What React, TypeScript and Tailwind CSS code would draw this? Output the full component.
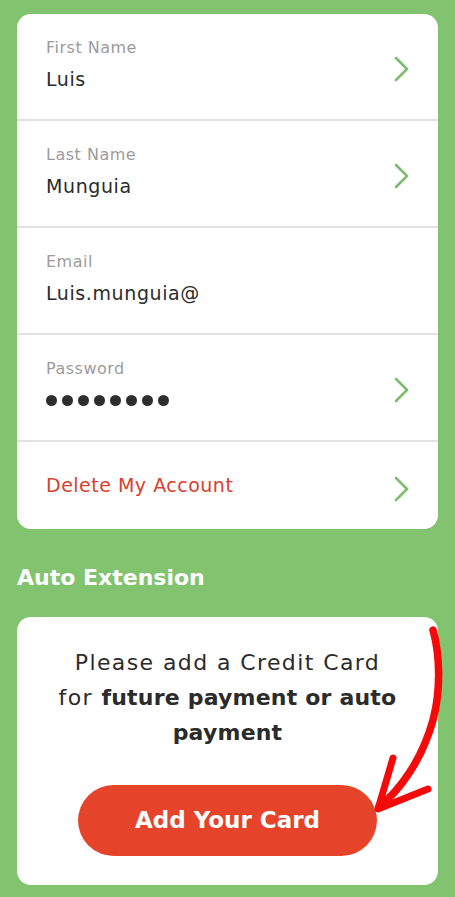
import React from "react";

const Chevron = () => (
  <svg width="16" height="26" viewBox="0 0 16 26" fill="none" className="shrink-0">
    <polyline points="2,2 13,13 2,24" stroke="#7dbd6b" strokeWidth="2.6" strokeLinecap="round" strokeLinejoin="round" />
  </svg>
);

const Row = ({ label, value, chevron = true, dots = false }: { label: string; value?: string; chevron?: boolean; dots?: boolean }) => (
  <div className="h-[107px] border-b-2 border-[#e2e2e2] flex items-start pl-[29px] pr-[28px]">
    <div className="flex-1 pt-[24px]">
      <div className="text-[16px] leading-[20px] tracking-[0.5px] text-[#9b9b9b]">{label}</div>
      {dots ? (
        <div className="mt-[14px] flex gap-[5px] h-[14px] items-center">
          {Array.from({ length: 8 }).map((_, i) => (
            <span key={i} className="w-[11px] h-[11px] rounded-full bg-[#2e2e2e]" />
          ))}
        </div>
      ) : (
        <div className="mt-[8px] text-[19px] leading-[26px] tracking-[0.6px] text-[#2b2b2b]">{value}</div>
      )}
    </div>
    {chevron && (
      <div className="pt-[42px]">
        <Chevron />
      </div>
    )}
  </div>
);

export default function App() {
  return (
    <div
      className="w-[455px] h-[897px] bg-[#81c36f] px-[17px] pt-[14px] relative overflow-hidden"
      style={{ fontFamily: "'DejaVu Sans', Inter, sans-serif" }}
    >
      <div className="bg-white rounded-[14px] overflow-hidden">
        <Row label="First Name" value="Luis" />
        <Row label="Last Name" value="Munguia" />
        <Row label="Email" value="Luis.munguia@" chevron={false} />
        <Row label="Password" dots />
        <div className="h-[87px] flex items-center pl-[29px] pr-[28px]">
          <div className="flex-1 text-[19px] tracking-[0.5px] text-[#d8402f]">Delete My Account</div>
          <div className="pt-[6px]">
            <Chevron />
          </div>
        </div>
      </div>

      <div className="mt-[35px] text-[22px] leading-[28px] font-bold text-white">Auto Extension</div>

      <div className="mt-[25px] bg-white rounded-[14px] pt-[28px] pb-[29px] flex flex-col items-center">
        <div className="text-[22px] leading-[35px] tracking-[1.4px] text-[#2b2b2b] text-center w-[390px]">
          Please add a Credit Card
          <br />
          for <span className="font-bold tracking-[0.2px]">future payment or auto payment</span>
        </div>
        <button className="mt-[35px] w-[299px] h-[71px] rounded-full bg-[#e5432a] text-white text-[23px] font-bold">
          Add Your Card
        </button>
      </div>

      <svg className="absolute left-0 top-0 pointer-events-none" width="455" height="897" viewBox="0 0 455 897" fill="none">
        <path d="M433 630 C 440 655, 441 690, 433 720 C 422 760, 400 790, 379 807" stroke="#f50a0a" strokeWidth="7.5" strokeLinecap="round" />
        <path d="M393 758 L 378 809 L 428 789" stroke="#f50a0a" strokeWidth="7" strokeLinecap="round" strokeLinejoin="round" />
      </svg>
    </div>
  );
}
